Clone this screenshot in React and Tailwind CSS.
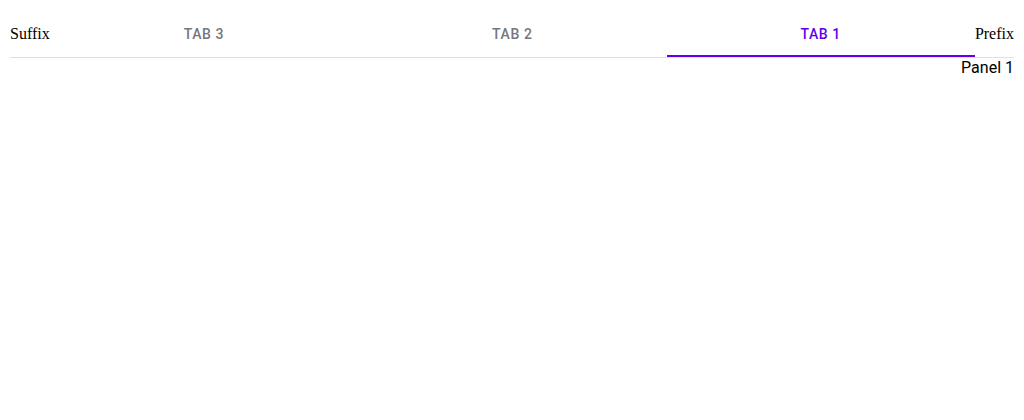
import { useState } from 'react';

const tabs = [
  { id: 1, label: 'Tab 1' },
  { id: 2, label: 'Tab 2' },
  { id: 3, label: 'Tab 3' },
];

export default function App() {
  const [active, setActive] = useState(1);

  return (
    <div dir="rtl" className="min-h-screen bg-white px-[10px] pt-[10px]">
      <div className="flex items-center border-b border-[#e0e0e0]">
        <span className="shrink-0 font-['Liberation_Serif',serif] text-base text-black">Prefix</span>
        <div className="flex flex-1">
          {tabs.map((tab) => (
            <button
              key={tab.id}
              onClick={() => setActive(tab.id)}
              className={`relative flex h-[47px] flex-1 items-center justify-center font-['Roboto',sans-serif] text-sm font-medium uppercase tracking-[0.6px] ${
                active === tab.id ? 'text-[#6200ee]' : 'text-[#73777d]'
              }`}
            >
              {tab.label}
              {active === tab.id && (
                <span className="absolute bottom-0 left-0 right-0 h-[2px] bg-[#6200ee]" />
              )}
            </button>
          ))}
        </div>
        <span className="shrink-0 font-['Liberation_Serif',serif] text-base text-black">Suffix</span>
      </div>
      <div className="pt-[1px] font-['Roboto',sans-serif] text-base leading-[18px] text-black">
        Panel {active}
      </div>
    </div>
  );
}
